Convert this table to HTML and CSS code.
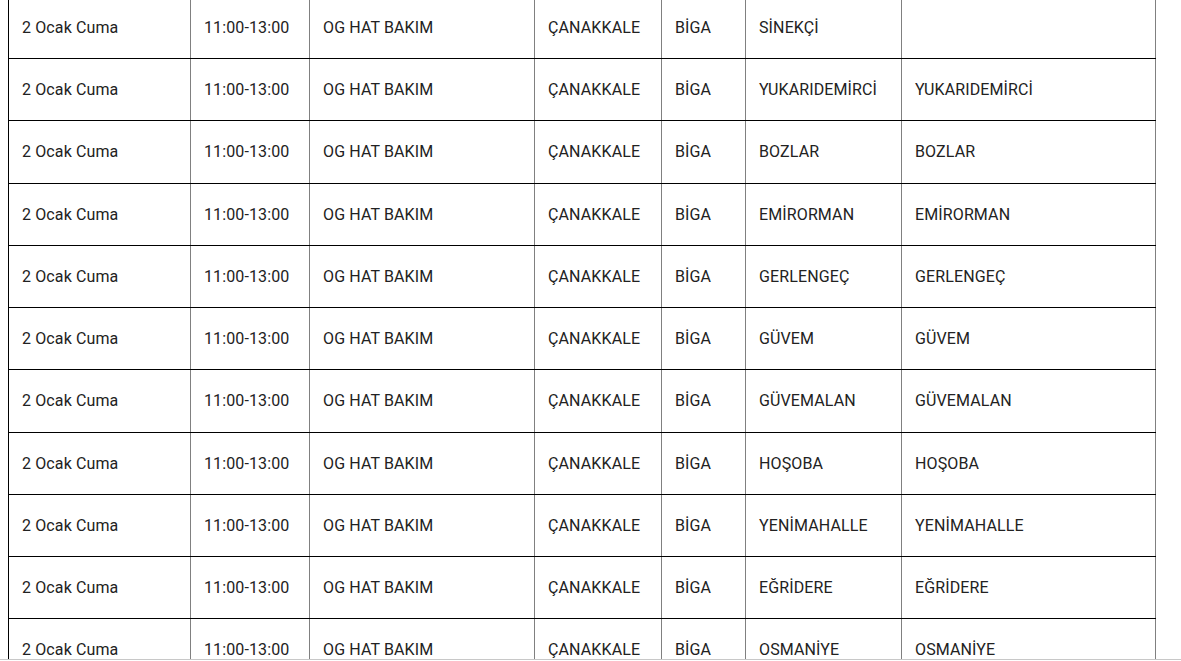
FILE: index.html
```html
<!DOCTYPE html>
<html lang="tr">
<head>
<meta charset="utf-8">
<link rel="stylesheet" href="styles.css">
</head>
<body>
<div class="scroller">
<table class="outages">
<colgroup>
<col class="c-date"><col class="c-time"><col class="c-reason"><col class="c-city"><col class="c-district"><col class="c-village"><col class="c-area">
</colgroup>
<tbody>
<tr><td>2 Ocak Cuma</td><td>11:00-13:00</td><td>OG HAT BAKIM</td><td>ÇANAKKALE</td><td>BİGA</td><td>SİNEKÇİ</td><td></td></tr>
<tr><td>2 Ocak Cuma</td><td>11:00-13:00</td><td>OG HAT BAKIM</td><td>ÇANAKKALE</td><td>BİGA</td><td>YUKARIDEMİRCİ</td><td>YUKARIDEMİRCİ</td></tr>
<tr><td>2 Ocak Cuma</td><td>11:00-13:00</td><td>OG HAT BAKIM</td><td>ÇANAKKALE</td><td>BİGA</td><td>BOZLAR</td><td>BOZLAR</td></tr>
<tr><td>2 Ocak Cuma</td><td>11:00-13:00</td><td>OG HAT BAKIM</td><td>ÇANAKKALE</td><td>BİGA</td><td>EMİRORMAN</td><td>EMİRORMAN</td></tr>
<tr><td>2 Ocak Cuma</td><td>11:00-13:00</td><td>OG HAT BAKIM</td><td>ÇANAKKALE</td><td>BİGA</td><td>GERLENGEÇ</td><td>GERLENGEÇ</td></tr>
<tr><td>2 Ocak Cuma</td><td>11:00-13:00</td><td>OG HAT BAKIM</td><td>ÇANAKKALE</td><td>BİGA</td><td>GÜVEM</td><td>GÜVEM</td></tr>
<tr><td>2 Ocak Cuma</td><td>11:00-13:00</td><td>OG HAT BAKIM</td><td>ÇANAKKALE</td><td>BİGA</td><td>GÜVEMALAN</td><td>GÜVEMALAN</td></tr>
<tr><td>2 Ocak Cuma</td><td>11:00-13:00</td><td>OG HAT BAKIM</td><td>ÇANAKKALE</td><td>BİGA</td><td>HOŞOBA</td><td>HOŞOBA</td></tr>
<tr><td>2 Ocak Cuma</td><td>11:00-13:00</td><td>OG HAT BAKIM</td><td>ÇANAKKALE</td><td>BİGA</td><td>YENİMAHALLE</td><td>YENİMAHALLE</td></tr>
<tr><td>2 Ocak Cuma</td><td>11:00-13:00</td><td>OG HAT BAKIM</td><td>ÇANAKKALE</td><td>BİGA</td><td>EĞRİDERE</td><td>EĞRİDERE</td></tr>
<tr><td>2 Ocak Cuma</td><td>11:00-13:00</td><td>OG HAT BAKIM</td><td>ÇANAKKALE</td><td>BİGA</td><td>OSMANİYE</td><td>OSMANİYE</td></tr>
</tbody>
</table>
</div>
<div class="bottom-edge"></div>
</body>
</html>
```
FILE: styles.css
```css
html, body {
  margin: 0;
  padding: 0;
  background: #fff;
  overflow: hidden;
  height: 100%;
}
body {
  font-family: Roboto, "Liberation Sans", Arial, sans-serif;
  font-size: 16px;
  color: #222;
}
.scroller {
  padding-left: 8px;
  margin-top: -4px;
}
.outages {
  border-collapse: collapse;
  table-layout: fixed;
  width: 1147px;
}
.c-date { width: 182px; }
.c-time { width: 119px; }
.c-reason { width: 225px; }
.c-city { width: 127px; }
.c-district { width: 84px; }
.c-village { width: 156px; }
.c-area { width: 254px; }
.outages td {
  border-left: 1px solid #808080;
  border-right: 1px solid #808080;
  border-top: 1px solid #000;
  border-bottom: 1px solid #000;
  padding: 20px 13px;
  line-height: 21.22px;
  height: 21.22px;
  vertical-align: middle;
  white-space: nowrap;
  letter-spacing: 0.12px;
}
.outages td:first-child {
  border-left-color: #000;
}
.bottom-edge {
  position: fixed;
  left: 0;
  right: 0;
  bottom: 0;
  height: 1px;
  border-top: 1px solid #c8c8c8;
  background: #fff;
}
```
